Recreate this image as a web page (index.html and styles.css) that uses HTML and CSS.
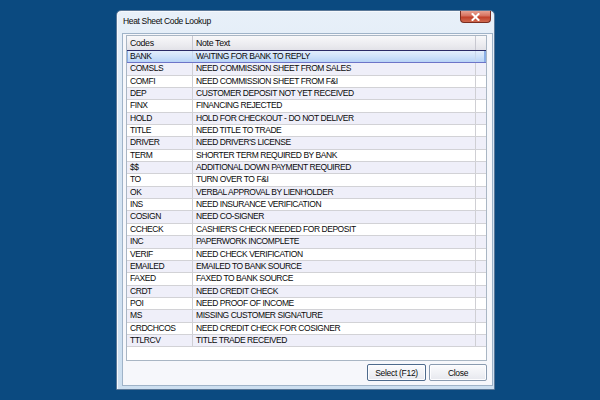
FILE: index.html
```html
<!DOCTYPE html>
<html>
<head>
<meta charset="utf-8">
<link rel="stylesheet" href="styles.css">
</head>
<body>
<div class="window">
  <div class="titlebar">
    <span class="title">Heat Sheet Code Lookup</span>
    <span class="close-x"><svg width="9" height="8" viewBox="0 0 9 8"><path d="M1.5 1 L7.5 7 M7.5 1 L1.5 7" stroke="#fff" stroke-width="2" stroke-linecap="square"/></svg></span>
  </div>
  <div class="pane">
    <div class="grid">
      <div class="row head"><div class="c1">Codes</div><div class="c2">Note Text</div><div class="c3"></div></div>
      <div class="row sel"><div class="c1">BANK</div><div class="c2">WAITING FOR BANK TO REPLY</div><div class="c3"></div></div>
      <div class="row alt"><div class="c1">COMSLS</div><div class="c2">NEED COMMISSION SHEET FROM SALES</div><div class="c3"></div></div>
      <div class="row"><div class="c1">COMFI</div><div class="c2">NEED COMMISSION SHEET FROM F&amp;I</div><div class="c3"></div></div>
      <div class="row alt"><div class="c1">DEP</div><div class="c2">CUSTOMER DEPOSIT NOT YET RECEIVED</div><div class="c3"></div></div>
      <div class="row"><div class="c1">FINX</div><div class="c2">FINANCING REJECTED</div><div class="c3"></div></div>
      <div class="row alt"><div class="c1">HOLD</div><div class="c2">HOLD FOR CHECKOUT - DO NOT DELIVER</div><div class="c3"></div></div>
      <div class="row"><div class="c1">TITLE</div><div class="c2">NEED TITLE TO TRADE</div><div class="c3"></div></div>
      <div class="row alt"><div class="c1">DRIVER</div><div class="c2">NEED DRIVER'S LICENSE</div><div class="c3"></div></div>
      <div class="row"><div class="c1">TERM</div><div class="c2">SHORTER TERM REQUIRED BY BANK</div><div class="c3"></div></div>
      <div class="row alt"><div class="c1">$$</div><div class="c2">ADDITIONAL DOWN PAYMENT REQUIRED</div><div class="c3"></div></div>
      <div class="row"><div class="c1">TO</div><div class="c2">TURN OVER TO F&amp;I</div><div class="c3"></div></div>
      <div class="row alt"><div class="c1">OK</div><div class="c2">VERBAL APPROVAL BY LIENHOLDER</div><div class="c3"></div></div>
      <div class="row"><div class="c1">INS</div><div class="c2">NEED INSURANCE VERIFICATION</div><div class="c3"></div></div>
      <div class="row alt"><div class="c1">COSIGN</div><div class="c2">NEED CO-SIGNER</div><div class="c3"></div></div>
      <div class="row"><div class="c1">CCHECK</div><div class="c2">CASHIER'S CHECK NEEDED FOR DEPOSIT</div><div class="c3"></div></div>
      <div class="row alt"><div class="c1">INC</div><div class="c2">PAPERWORK INCOMPLETE</div><div class="c3"></div></div>
      <div class="row"><div class="c1">VERIF</div><div class="c2">NEED CHECK VERIFICATION</div><div class="c3"></div></div>
      <div class="row alt"><div class="c1">EMAILED</div><div class="c2">EMAILED TO BANK SOURCE</div><div class="c3"></div></div>
      <div class="row"><div class="c1">FAXED</div><div class="c2">FAXED TO BANK SOURCE</div><div class="c3"></div></div>
      <div class="row alt"><div class="c1">CRDT</div><div class="c2">NEED CREDIT CHECK</div><div class="c3"></div></div>
      <div class="row"><div class="c1">POI</div><div class="c2">NEED PROOF OF INCOME</div><div class="c3"></div></div>
      <div class="row alt"><div class="c1">MS</div><div class="c2">MISSING CUSTOMER SIGNATURE</div><div class="c3"></div></div>
      <div class="row"><div class="c1">CRDCHCOS</div><div class="c2">NEED CREDIT CHECK FOR COSIGNER</div><div class="c3"></div></div>
      <div class="row alt"><div class="c1">TTLRCV</div><div class="c2">TITLE TRADE RECEIVED</div><div class="c3"></div></div>
    </div>
    <div class="buttons">
      <button class="btn default">Select (F12)</button>
      <button class="btn">Close</button>
    </div>
  </div>
</div>
</body>
</html>
```
FILE: styles.css
```css
html, body {
  margin: 0;
  padding: 0;
}
body {
  width: 600px;
  height: 400px;
  background: #0b4a80;
  font-family: "Liberation Sans", Arial, sans-serif;
  overflow: hidden;
}
.window {
  box-sizing: border-box;
  width: 379px;
  height: 380px;
  margin: 10px 0 0 116px;
  border: 1px solid #5b7898;
  border-radius: 5px 5px 0 0;
  background: linear-gradient(180deg, #e8f0f9 0%, #d6e5f3 40%, #cddff0 100%);
  padding: 0 1px 3px 5px;
  display: flex;
  flex-direction: column;
  box-shadow: inset 1px 1px 0 #f6f9fd;
}
.titlebar {
  height: 22px;
  display: flex;
  justify-content: space-between;
  align-items: flex-start;
  flex: none;
}
.title {
  font-size: 8.5px;
  letter-spacing: -0.35px;
  color: #0a0a0a;
  padding: 5px 0 0 1px;
}
.close-x {
  width: 31px;
  height: 12px;
  margin-right: 2px;
  box-sizing: border-box;
  border: 1px solid #7a2d20;
  border-top: none;
  border-radius: 0 0 4px 4px;
  background: linear-gradient(180deg, #e8a293 0%, #d6705d 45%, #c2402a 55%, #cf6a50 100%);
  display: flex;
  align-items: center;
  justify-content: center;
}
.pane {
  flex: 1;
  box-sizing: border-box;
  border: 1px solid #9fb3c8;
  background: #f6f7fb;
  padding: 1px 5px 4px 3px;
  display: flex;
  flex-direction: column;
}
.grid {
  box-sizing: border-box;
  height: 326px;
  border: 1px solid #a9b6c4;
  background: #fff;
}
.row {
  box-sizing: border-box;
  height: 12.35px;
  display: grid;
  grid-template-columns: 66px 283px 1fr;
  border-bottom: 1px solid #d2d2d6;
  font-size: 8.5px;
  letter-spacing: -0.45px;
  color: #0a0a0a;
  line-height: 11.3px;
}
.row > div {
  box-sizing: border-box;
  border-right: 1px solid #cfcfd4;
  padding-left: 3px;
  white-space: nowrap;
  overflow: hidden;
}
.row > .c3 {
  border-right: none;
}
.row.alt {
  background: #efeff9;
}
.row.head {
  height: 15px;
  line-height: 14px;
  font-size: 8.8px;
  letter-spacing: -0.35px;
  background: linear-gradient(180deg, #f8f8fa 0%, #ececf0 60%, #e2e2e8 100%);
  border-bottom: 1px solid #c4c4cc;
}
.row.head > div {
  border-right-color: #c8c8d0;
}
.row.sel {
  background: linear-gradient(180deg, #e3eefc 0%, #cfe2fa 50%, #b7d3f6 100%);
  border-top: 1px solid #2a2a66;
  border-bottom: 1px solid #6d74c8;
  margin-top: -1px;
  height: 13.35px;
  box-shadow: inset 1px 0 0 #8aaee6, inset -2px 0 0 #8aaee6;
}
.row.sel > div {
  border-right-color: #c9d6ea;
}
.buttons {
  margin-top: 3px;
  display: flex;
  justify-content: flex-end;
  gap: 3px;
}
.btn {
  box-sizing: border-box;
  width: 58px;
  height: 17px;
  padding: 0;
  font-family: "Liberation Sans", Arial, sans-serif;
  font-size: 8.5px;
  letter-spacing: -0.3px;
  color: #0a0a0a;
  border: 1px solid #8a9bb0;
  border-radius: 2px;
  background: linear-gradient(180deg, #fbfbfd 0%, #f1f2f6 50%, #e6e8ee 100%);
  box-shadow: inset 0 0 0 1px #fdfdff;
}
.btn.default {
  width: 59px;
  border-color: #4d6a8c;
}
```
